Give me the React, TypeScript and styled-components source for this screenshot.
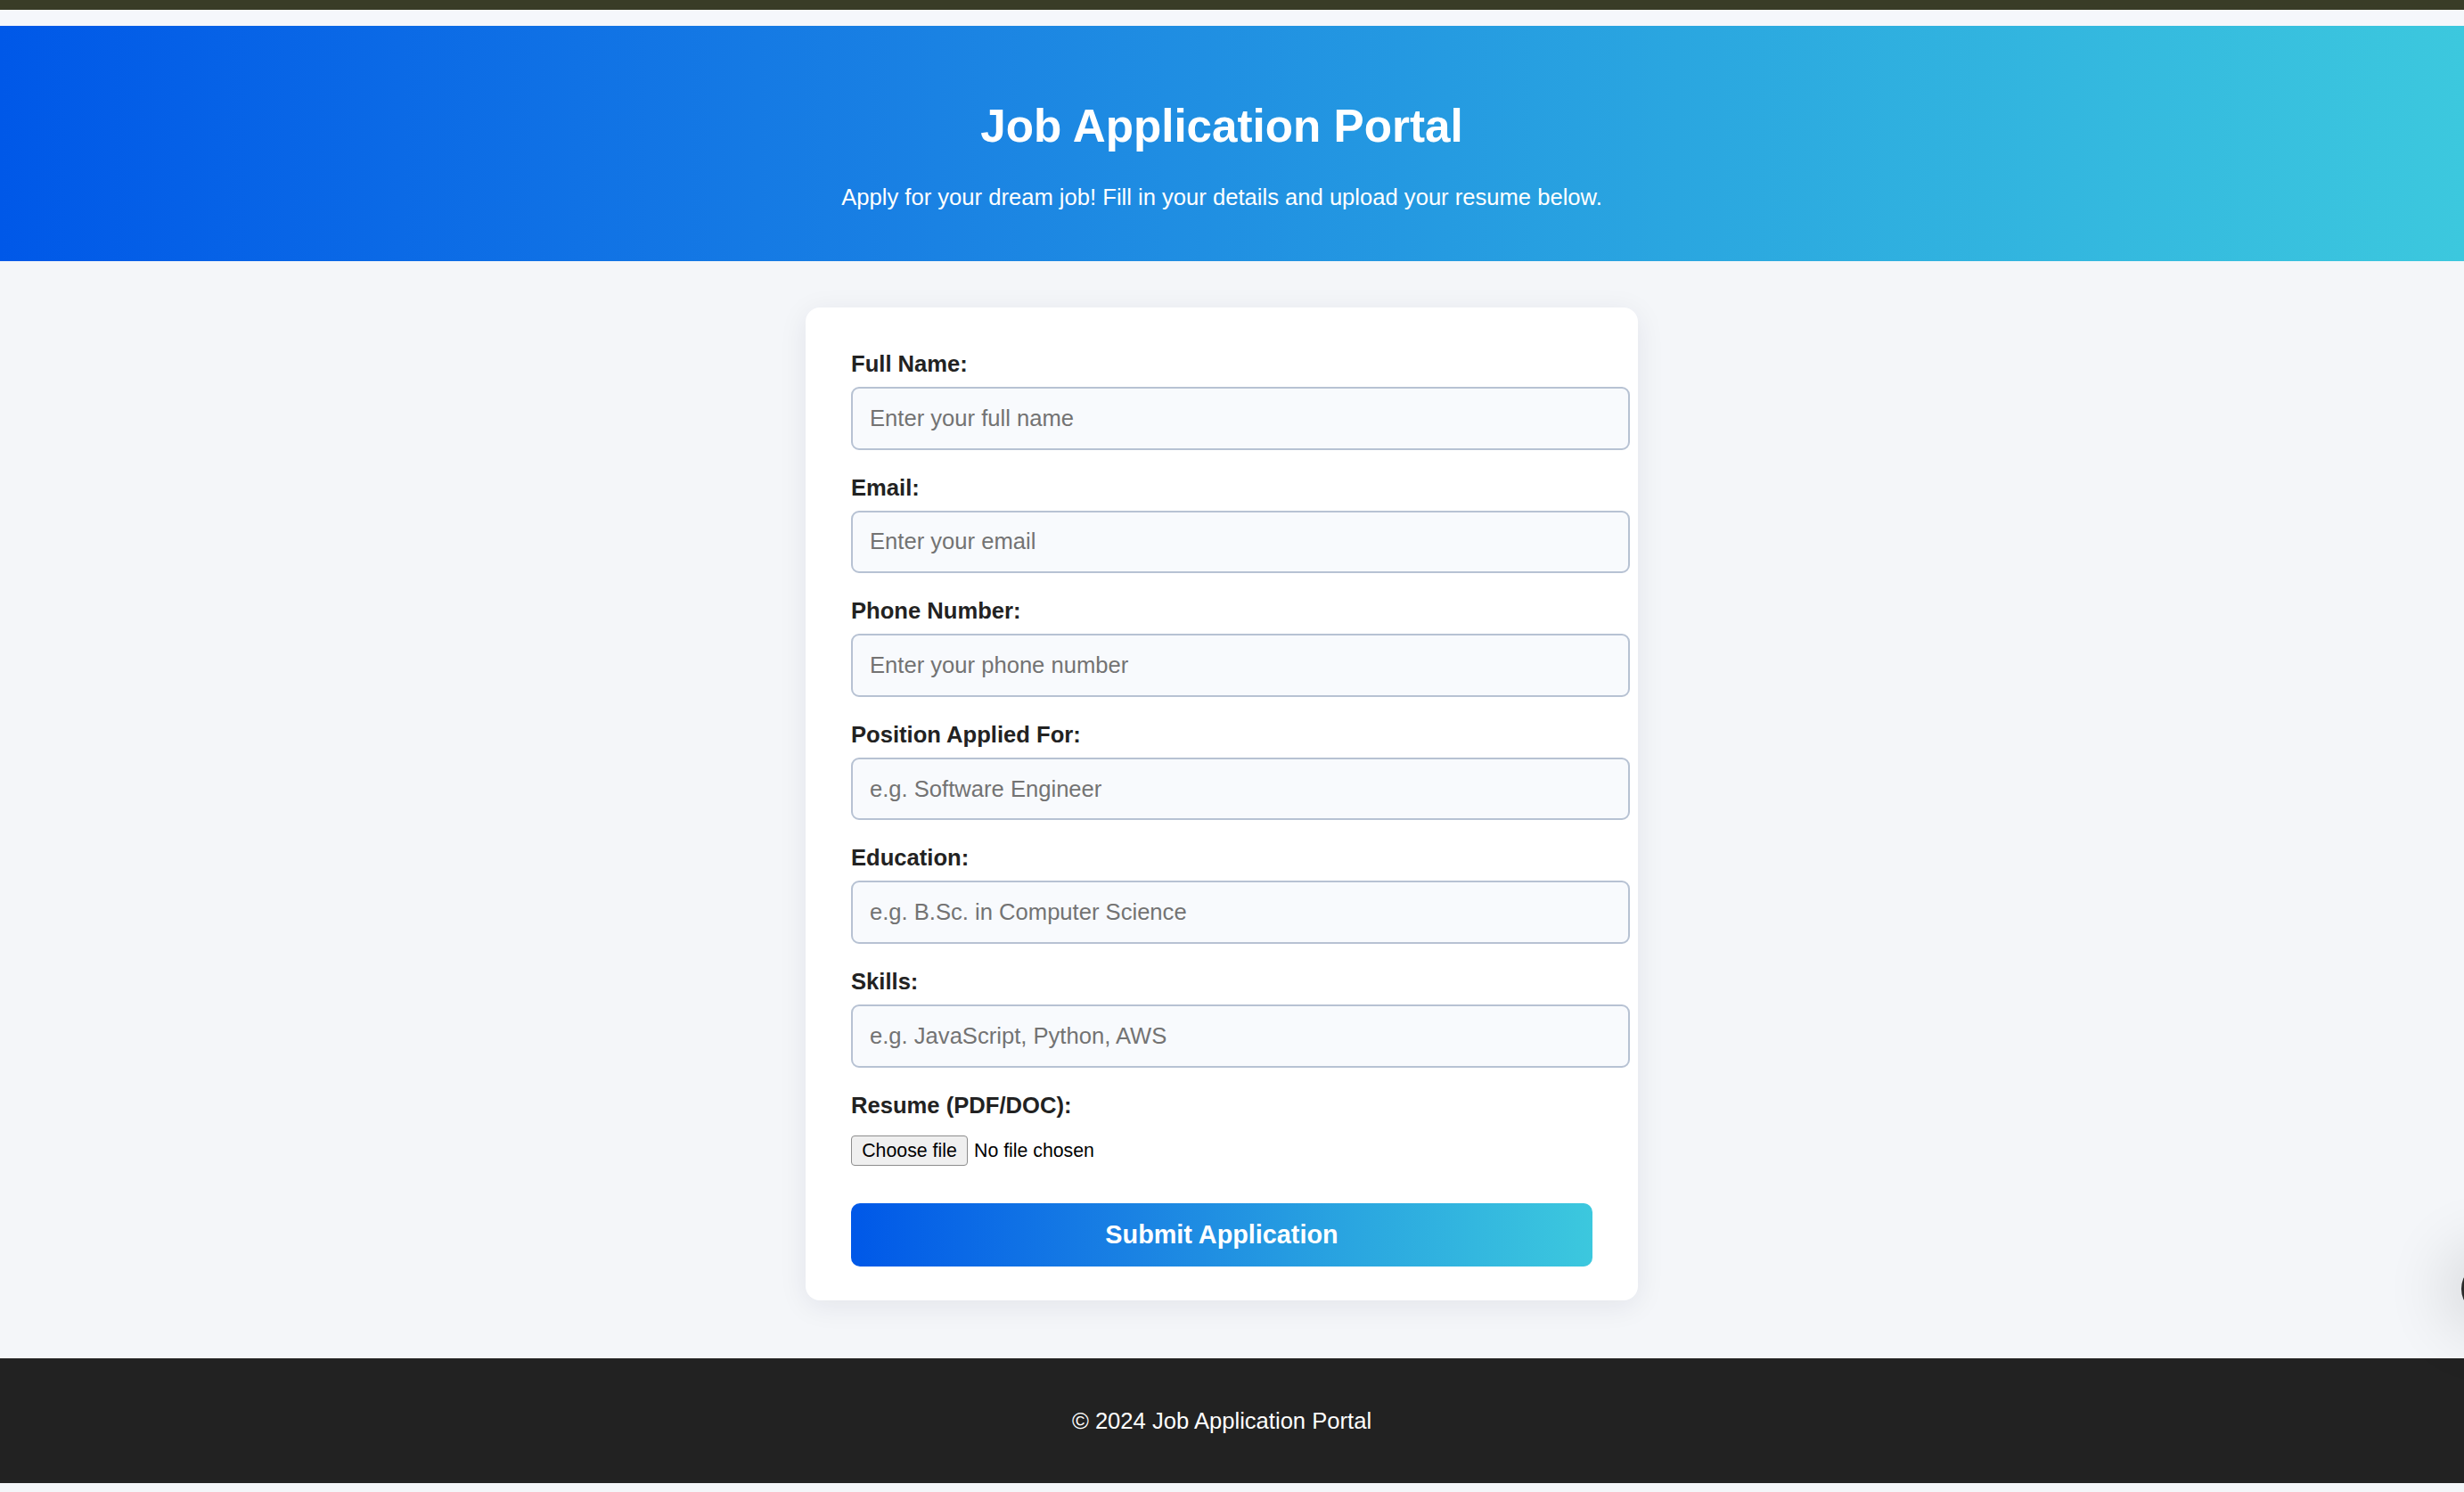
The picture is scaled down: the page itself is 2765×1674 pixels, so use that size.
import React from "react";
import styled, { createGlobalStyle } from "styled-components";

const GRADIENT = "linear-gradient(90deg, #0058e8 0%, #1a82e3 38%, #2aa6e0 68%, #3cc8de 100%)";

const GlobalStyle = createGlobalStyle`
  html, body {
    margin: 0;
    padding: 0;
    background: #f4f6f9;
    overflow: hidden;
  }
  body {
    font-family: "Liberation Sans", Arial, Helvetica, sans-serif;
    color: #222222;
  }
  * { box-sizing: border-box; }
`;

const Page = styled.div`
  display: flex;
  flex-direction: column;
  min-height: 1674px;
  background: #f4f6f9;
`;

const TopBar = styled.div`
  height: 11px;
  background: #393c27;
`;

const TopStrip = styled.div`
  height: 18px;
  background: #f5f7fb;
`;

const Header = styled.header`
  background: ${GRADIENT};
  padding: 83px 23px 57px 0;
  text-align: center;
  color: #ffffff;
`;

const Title = styled.h1`
  margin: 0;
  font-size: 51.2px;
  line-height: 59px;
  font-weight: 700;
`;

const Subtitle = styled.p`
  margin: 36px 0 0;
  font-size: 25.6px;
  line-height: 29px;
`;

const Main = styled.main`
  display: flex;
  justify-content: center;
  padding: 52px 23px 65px 0;
`;

const Card = styled.form`
  width: 934px;
  background: #ffffff;
  border-radius: 16px;
  padding: 49px 51px 38px;
  box-shadow: 0 6px 32px rgba(20, 30, 60, 0.08);
  display: flex;
  flex-direction: column;
`;

const Field = styled.div`
  display: flex;
  flex-direction: column;
  margin-bottom: 28px;
`;

const Label = styled.label`
  display: block;
  font-size: 25.6px;
  line-height: 29.4px;
  font-weight: 700;
  color: #222222;
  margin-bottom: 10.6px;
`;

const Input = styled.input`
  box-sizing: content-box;
  width: 100%;
  height: 28.6px;
  padding: 19px;
  border: 2px solid #b7c2d3;
  border-radius: 9px;
  background: #f8fafd;
  font-family: "Liberation Sans", Arial, Helvetica, sans-serif;
  font-size: 25.6px;
  color: #222222;
  outline: none;
  &::placeholder {
    color: #737373;
  }
`;

const FileRow = styled.label`
  display: flex;
  align-items: center;
  gap: 7px;
  margin-top: 8.7px;
  margin-bottom: 42px;
  font-size: 21.3px;
  color: #000000;
  cursor: pointer;
`;

const HiddenFile = styled.input`
  display: none;
`;

const FileButton = styled.span`
  display: inline-flex;
  align-items: center;
  justify-content: center;
  height: 34px;
  width: 131px;
  background: #efefef;
  border: 1.6px solid #8d8d8d;
  border-radius: 4px;
  font-size: 21.3px;
  color: #000000;
`;

const FileText = styled.span`
  font-size: 21.3px;
`;

const SubmitButton = styled.button`
  width: 100%;
  height: 71px;
  border: none;
  border-radius: 10px;
  background: ${GRADIENT};
  color: #ffffff;
  font-family: "Liberation Sans", Arial, Helvetica, sans-serif;
  font-size: 28.8px;
  font-weight: 700;
  cursor: pointer;
`;

const Footer = styled.footer`
  height: 140px;
  background: #222222;
  color: #ffffff;
  display: flex;
  align-items: center;
  justify-content: center;
  padding-right: 23px;
  font-size: 25.6px;
`;

const BottomStrip = styled.div`
  height: 8px;
  background: #f4f6f9;
`;

const FloatingBubble = styled.div`
  position: fixed;
  left: 2762px;
  top: 1416px;
  width: 60px;
  height: 60px;
  border-radius: 50%;
  background: #2a2a2a;
  box-shadow: 0 0 70px 20px rgba(0, 0, 0, 0.12);
`;

const fields = [
  { id: "name", label: "Full Name:", placeholder: "Enter your full name", type: "text" },
  { id: "email", label: "Email:", placeholder: "Enter your email", type: "email" },
  { id: "phone", label: "Phone Number:", placeholder: "Enter your phone number", type: "tel" },
  { id: "position", label: "Position Applied For:", placeholder: "e.g. Software Engineer", type: "text" },
  { id: "education", label: "Education:", placeholder: "e.g. B.Sc. in Computer Science", type: "text" },
  { id: "skills", label: "Skills:", placeholder: "e.g. JavaScript, Python, AWS", type: "text" },
];

export default function App() {
  return (
    <>
      <GlobalStyle />
      <Page>
        <TopBar />
        <TopStrip />
        <Header>
          <Title>Job Application Portal</Title>
          <Subtitle>Apply for your dream job! Fill in your details and upload your resume below.</Subtitle>
        </Header>
        <Main>
          <Card onSubmit={(e) => e.preventDefault()}>
            {fields.map((f) => (
              <Field key={f.id}>
                <Label htmlFor={f.id}>{f.label}</Label>
                <Input id={f.id} type={f.type} placeholder={f.placeholder} />
              </Field>
            ))}
            <Label htmlFor="resume">Resume (PDF/DOC):</Label>
            <FileRow>
              <HiddenFile id="resume" type="file" accept=".pdf,.doc,.docx" />
              <FileButton>Choose file</FileButton>
              <FileText>No file chosen</FileText>
            </FileRow>
            <SubmitButton type="submit">Submit Application</SubmitButton>
          </Card>
        </Main>
        <Footer>© 2024 Job Application Portal</Footer>
        <BottomStrip />
        <FloatingBubble />
      </Page>
    </>
  );
}
